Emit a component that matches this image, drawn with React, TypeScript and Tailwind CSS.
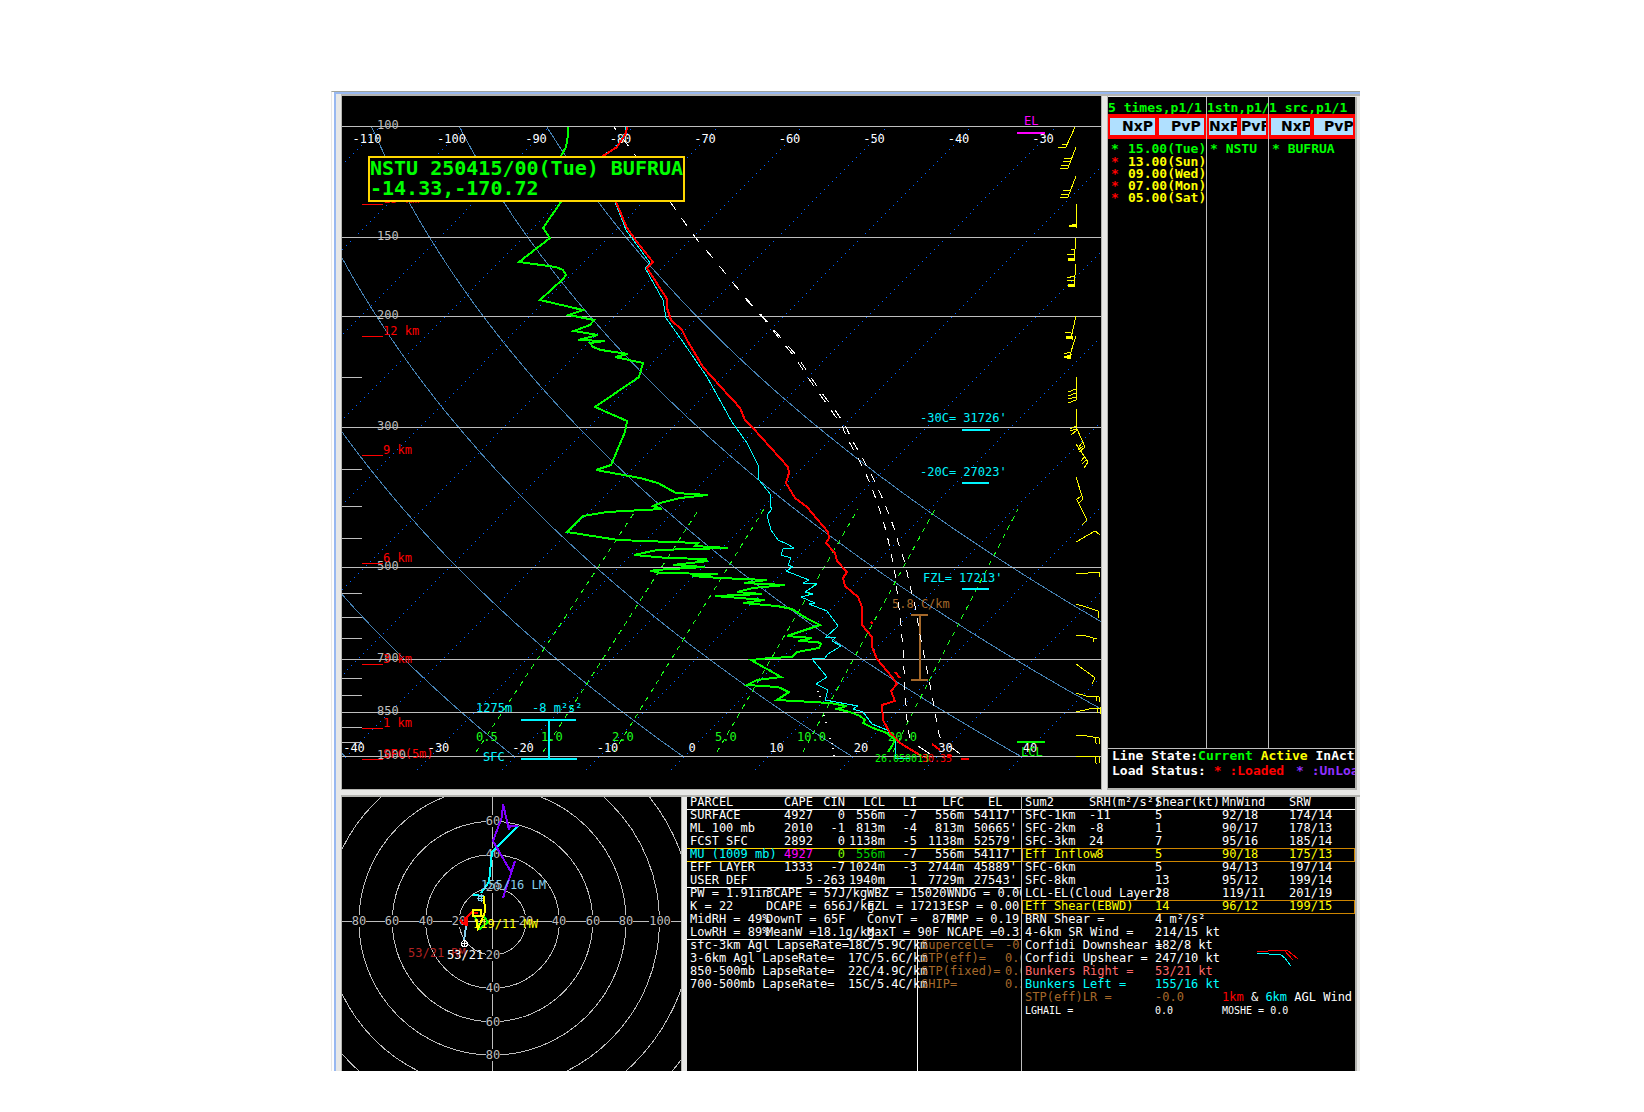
import React from "react";

type Pt = [number, number];

/* ---------- Skew-T geometry ---------- */
const yOf = (p: number) => 126.5 + 630 * Math.log10(p / 100);
const xOf = (t: number, y: number) => 438 + 8.45 * (t + 30) + (748 - y) * 0.9935;
const join = (a: Pt[]) => a.map(([x, y]) => `${Math.round(x * 10) / 10},${Math.round(y * 10) / 10}`).join(" ");

const isotherms = Array.from({ length: 17 }, (_, i) => -120 + i * 10);
const dots = (t: number) => {
  let d = "";
  for (let y = 769; y >= 128; y -= 4) {
    const x = Math.round(xOf(t, y));
    if (x >= 342 && x < 1100) d += `M${x} ${y}h1v1h-1z`;
  }
  return d;
};

const thetas = [-40, -20, 0, 20, 40, 60, 80];
const adiabat = (th: number) => {
  const out: Pt[] = [];
  for (let p = 100; p <= 1000; p += 10) {
    const y = yOf(p);
    out.push([xOf((th + 273.15) * Math.pow(p / 1000, 0.2857) - 273.15, y), y]);
  }
  return join(out);
};

const parse = (s: string) => s.split(" ").map((q) => q.split(",").map(Number) as Pt);
const at = (a: Pt[], y: number) => {
  const i = a.findIndex((q, k) => k > 0 && q[1] >= y);
  const [x0, y0] = a[i - 1];
  const [x1, y1] = a[i];
  return x0 + ((x1 - x0) * (y - y0)) / (y1 - y0);
};
/* dashes of equal height: 8 on, 8 off, whatever the slope */
const verticalDashes = (s: string) => {
  const a = parse(s);
  const end = a[a.length - 1][1];
  let d = "";
  for (let y = 10; y < end; y += 16) {
    const top = Math.max(y, a[0][1] + 1);
    const bottom = Math.min(y + 8, end);
    if (bottom <= top) continue;
    d += `M${at(a, top).toFixed(1)} ${top}L${at(a, bottom).toFixed(1)} ${bottom}`;
  }
  return d;
};

const mixing = ["M476 752L636 510", "M543 752L699 509", "M614 752L764 509", "M717 752L858 509", "M803 752L935 509", "M893 752L913 712L1018 509"];

const pressures: [number, number][] = [[100, 126], [150, 237], [200, 316], [300, 427], [500, 567], [700, 659], [850, 712], [1000, 756]];
const minorTicks = [377, 469, 506, 538, 593, 617, 638, 678, 695, 727, 742];
const kmMarks: [string, number, number][] = [["15 km", 204, 203], ["12 km", 336, 335], ["9 km", 455, 454], ["6 km", 563, 562], ["3 km", 664, 663], ["1 km", 728, 727], ["SFC(5m)", 759, 758]];
const mixLabels: [string, number][] = [["0.5", 476], ["1.0", 541], ["2.0", 612], ["5.0", 715], ["10.0", 797], ["20.0", 888]];

const dewPoint = "568,127 568,135 566,147 561,156 548,178 561,202 543,228 550,238 519,262 556,267 563,270 566,275 563,279 540,300 583,310 569,315 594,320 590,325 574,331 598,335 578,340 605,341 590,343 593,347 601,350 628,354 615,357 643,363 639,377 595,407 627,421 625,432 611,465 596,470 640,478 658,483 676,493 708,495 680,498 660,503 653,506 662,509 607,512 583,516 567,532 618,540 698,543 695,546 728,548 657,550 634,555 667,558 707,559 697,561 708,561 673,565 705,567 655,570 652,571 660,573 718,574 692,576 720,578 767,580 744,583 785,585 753,588 737,592 762,594 715,596 765,600 743,603 777,606 792,609 806,618 820,625 787,636 812,638 798,641 818,642 821,644 819,648 797,652 792,657 770,658 751,660 781,677 757,680 747,685 778,687 789,692 777,700 830,703 847,706 837,709 850,712 860,716 865,720 863,723 873,728 887,733 895,740 892,746 888,752";
const temperature = "627,127 626,133 617,147 603,156 605,178 616,202 627,228 637,242 653,262 647,268 667,299 667,308 671,320 682,330 687,340 703,367 730,397 733,400 740,408 745,420 753,428 788,467 789,473 786,483 795,498 807,507 828,532 829,538 826,543 835,553 837,561 847,572 843,578 845,586 858,597 862,607 862,625 872,637 872,647 877,659 892,677 897,684 891,691 895,701 882,705 883,720 890,733 900,743 923,757";
const wetBulb = "626,127 625,133 616,147 602,156 604,178 615,202 626,230 650,263 645,268 663,300 666,318 683,342 707,377 727,413 732,422 747,443 758,465 759,480 771,495 770,506 772,509 767,515 771,530 778,540 787,544 794,548 783,549 781,555 791,558 788,565 793,567 786,571 809,580 803,583 817,584 805,592 813,594 801,597 815,603 809,604 827,611 838,626 826,637 836,637 832,641 841,646 828,654 825,658 812,659 827,677 816,684 828,690 825,700 858,706 853,709 863,712 872,724 887,730 895,740 895,758 910,759";
const parcelA = "613,126 627,144 671,203 685,223 697,240 713,258 733,283 749,303 765,320 779,338 794,356 809,379 821,396 831,410 842,426 848,440 855,452 865,472 872,488 878,505 883,520 887,535 891,553 895,573 898,600 901,625 903,650 905,690 907,720 909,737 920,748 930,754";
const parcelB = "613,126 627,144 671,203 685,223 697,240 713,258 733,283 750,303 766,320 781,338 797,356 812,379 824,396 835,410 845,425 852,440 862,457 873,478 881,495 888,512 894,528 899,545 904,560 907,572 911,590 916,610 919,630 923,650 927,670 931,690 935,712 939,737 953,749 963,756";

const barbs = [
  "1076,127 1067,147 1059,147", "1069,144 1063,144",
  "1077,147 1069,168 1061,168", "1070,165 1062,165", "1071,161 1064,161", "1072,158 1065,158",
  "1077,176 1069,197 1061,197", "1070,194 1062,194", "1072,190 1064,190",
  "1077,204 1077,226", "1077,238 1075,260", "1075,254 1068,255", "1075,249 1072,250",
  "1077,264 1075,286", "1075,280 1068,281", "1075,276 1068,278",
  "1077,316 1072,338", "1072,332 1066,332", "1077,336 1070,358", "1071,352 1065,354",
  "1077,377 1077,400 1069,403", "1077,397 1069,399", "1077,393 1069,396", "1077,389 1069,392",
  "1077,409 1078,430 1072,435", "1077,426 1071,429", "1077,429 1071,431",
  "1078,429 1086,447 1080,452", "1084,446 1079,450", "1083,443 1079,448",
  "1077,444 1089,462 1085,468", "1088,459 1083,464", "1086,456 1082,461",
  "1077,477 1084,499 1079,504", "1082,496 1077,500",
  "1078,500 1088,520 1083,525", "1077,542 1096,531 1101,535", "1096,531 1099,533",
  "1077,574 1089,573 1100,572 1101,577",
  "1077,604 1087,607 1099,611 1100,618",
  "1077,635 1087,636 1098,639", "1095,638 1094,642",
  "1077,664 1095,677 1095,680 1093,684",
  "1077,693 1087,696 1100,697 1101,702", "1097,697 1098,701",
  "1077,712 1090,709 1101,708 1101,714", "1098,709 1099,713",
  "1077,735 1088,736 1100,738 1101,744", "1096,738 1097,743 1098,744",
  "1077,756 1100,757 1101,763", "1096,757 1097,763 1098,764",
];
const flags = ["1077,224 1070,226 1077,227", "1076,258 1069,258 1069,260 1075,261", "1076,284 1069,284 1069,286 1075,287", "1073,336 1067,336 1067,338 1073,339", "1072,355 1065,357 1071,359"];

function SkewT() {
  return (
    <svg viewBox="342 96 759 693" className="block w-full bg-black font-['DejaVu_Sans_Mono',monospace] text-[12px]" shapeRendering="crispEdges" fill="none">
      {isotherms.map((t) => <path key={t} d={dots(t)} fill="#0060ff" />)}
      {thetas.map((t) => <polyline key={t} points={adiabat(t)} stroke="#4682b4" />)}
      {mixing.map((d) => <path key={d} d={d} stroke="#1cff1c" strokeDasharray="5 5" />)}
      {pressures.map(([p, y]) => (
        <g key={p}>
          <line x1="342" x2="1101" y1={y + 0.5} y2={y + 0.5} stroke="#bebebe" />
          <text x="377" y={y + 3} fill="#bebebe">{p}</text>
        </g>
      ))}
      {minorTicks.map((y) => <line key={y} x1="342" x2="362" y1={y + 0.5} y2={y + 0.5} stroke="#bebebe" />)}
      {kmMarks.map(([l, ly, ty]) => (
        <g key={l}>
          <line x1="362" x2="383" y1={ly + 0.5} y2={ly + 0.5} stroke="#ff0000" />
          <text x="383" y={ty} fill="#ff0000">{l}</text>
        </g>
      ))}
      {[-110, -100, -90, -80, -70, -60, -50, -40, -30].map((t) => (
        <text key={t} x={367 + (t + 110) * 8.45} y="143" fill="#fff" textAnchor="middle">{t}</text>
      ))}
      {[-40, -30, -20, -10, 0, 10, 20, 30, 40].map((t) => (
        <text key={t} x={354 + (t + 40) * 8.45} y="752" fill="#fff" textAnchor="middle">{t}</text>
      ))}
      {mixLabels.map(([l, x]) => <text key={l} x={x} y="741" fill="#1cff1c">{l}</text>)}

      <path d="M521 720H576M549 720V759M521 759H577M962 430H990M962 483H989M962 589H989" stroke="#00f5ff" strokeWidth="2" />
      <g fill="#00f5ff">
        <text x="476" y="712">1275m</text>
        <text x="532" y="712">-8 m²s²</text>
        <text x="483" y="761">SFC</text>
        <text x="920" y="422">-30C= 31726'</text>
        <text x="920" y="476">-20C= 27023'</text>
        <text x="923" y="582">FZL= 17213'</text>
      </g>
      <path d="M911 615H928M920 615V680M911 680H928" stroke="#a5682a" strokeWidth="2" />
      <text x="892" y="608" fill="#a5682a">5.8 C/km</text>
      <text x="1024" y="125" fill="#ff00ff">EL</text>
      <path d="M1017 133H1045" stroke="#ff00ff" strokeWidth="2" />
      <text x="1021" y="756" fill="#00ff00">LCL</text>
      <path d="M1017 742H1045" stroke="#00ff00" strokeWidth="2" />

      <path d={verticalDashes(parcelA)} stroke="#fff" />
      <path d={verticalDashes(parcelB)} stroke="#fff" />
      <path d="M817 691h2M819 696h2M823 715h2M825 722h2M829 738h2M831 743h2M832 748h2M833 755h2" stroke="#fff" />
      <polyline points={wetBulb} stroke="#00ffff" />
      <polyline points={temperature} stroke="#ff0000" strokeWidth="2" />
      <path d="M871 622l2 2M895 672l5 6M932 744l8 6M947 756h5M961 759h8" stroke="#ff0000" strokeWidth="2" />
      <polyline points={dewPoint} stroke="#00ff00" strokeWidth="2" />
      <g className="text-[10px]">
        <text x="875" y="762" fill="#00ff00">26.050013</text>
        <text x="922" y="762" fill="#ff0000">30.35</text>
      </g>
      <g transform="translate(-1 0)">
        {barbs.map((b) => <polyline key={b} points={b} stroke="#ffff00" />)}
        {flags.map((b) => <polygon key={b} points={b} fill="#ffff00" stroke="#ffff00" />)}
      </g>
    </svg>
  );
}

/* ---------- Hodograph ---------- */
const ringLabels: [string, number, number][] = [
  ["80", 359, 921], ["60", 392, 921], ["40", 426, 921], ["20", 459, 921], ["20", 526, 921], ["40", 559, 921], ["60", 593, 921], ["80", 626, 921], ["100", 660, 921],
  ["60", 493, 821], ["40", 493, 854], ["20", 493, 887], ["20", 493, 955], ["40", 493, 988], ["60", 493, 1022], ["80", 493, 1055],
];

function Hodograph() {
  return (
    <svg viewBox="342 797 339 274" className="block w-full bg-black font-['DejaVu_Sans_Mono',monospace] text-[12px]" shapeRendering="crispEdges" fill="none">
      <g stroke="#bebebe">
        {[1, 2, 3, 4, 5, 6, 7].map((n) => <circle key={n} cx="492.5" cy="921.5" r={n * 33.4} />)}
        <path d="M342 921.5H681M492.5 797V1071" />
      </g>
      {ringLabels.map(([l, x, y]) => (
        <g key={`${x}-${y}`}>
          <rect x={x - l.length * 3.6} y={y - 6} width={l.length * 7.2} height="12" fill="#000" />
          <text x={x} y={y + 4} textAnchor="middle" fill="#bebebe">{l}</text>
        </g>
      ))}
      <polyline points="518,826 492,852 489,882 481,893" stroke="#00ffff" strokeWidth="2" />
      <polyline points="473,895 484,896" stroke="#00ffff" strokeWidth="2" />
      <polyline points="503,898 515,861 511,872 493,841 502,817 503,804 509,830 510,826 518,826" stroke="#7f00ff" strokeWidth="2" />
      <g stroke="#87ceeb">
        <circle cx="481" cy="898" r="3" />
        <path d="M477 898h8M481 894v8" />
        <path d="M466 926L464 941" strokeWidth="2" />
      </g>
      <text x="481" y="889" fill="#87ceeb">155/16 LM</text>
      <text x="408" y="957" fill="#b22222">53/21 RM</text>
      <path d="M472 912L467 917V925L464 924L460 920M461 923h6M465 925v-8" stroke="#ff0000" strokeWidth="2" />
      <path d="M475 917L480 929L488 922L483 915" stroke="#00ff00" strokeWidth="2" />
      <path d="M484 896L485 912L478 929L476 920" stroke="#ffff00" strokeWidth="2" />
      <rect x="473" y="910" width="8" height="6" stroke="#ffff00" strokeWidth="2" />
      <path d="M474 913h4" stroke="#ff0000" strokeWidth="2" />
      <text x="473" y="928" fill="#ffff00">119/11 MW</text>
      <g stroke="#fff">
        <circle cx="464.5" cy="943.5" r="3" />
        <path d="M461 943.5h7M464.5 940v7" />
      </g>
      <text x="447" y="959" fill="#fff">53/21</text>
    </svg>
  );
}

/* ---------- Selection panel ---------- */
function Col({ title, className, btn, children }: { title: string; className: string; btn: [string, string]; children: React.ReactNode }) {
  const b = "min-w-0 overflow-hidden whitespace-nowrap border-x-2 border-y-4 border-[#ff0000] bg-[#b0e0ff] text-left font-['DejaVu_Sans',sans-serif] text-[14px] leading-[17px] font-bold text-black";
  return (
    <section className={`min-w-0 overflow-hidden whitespace-pre ${className}`}>
      <h2 className="h-[17px] pt-[3px] text-[13px] leading-[16px] text-[#00ff00]">{title}</h2>
      <div className={`grid h-[25px] ${btn[0]}`}>
        <button className={`${b} ${btn[1]}`}>NxP</button>
        <button className={`${b} ${btn[1]}`}>PvP</button>
      </div>
      <ul className="pt-[4px] text-[13px] leading-[12px]">{children}</ul>
    </section>
  );
}

const times: [string, boolean][] = [["15.00(Tue)", true], ["13.00(Sun)", false], ["09.00(Wed)", false], ["07.00(Mon)", false], ["05.00(Sat)", false]];

function Selector() {
  return (
    <aside className="flex w-[252px] shrink-0 flex-col border-r-[3px] border-[#e8e8e6]">
      <div className="flex flex-1 flex-col overflow-hidden border-r-2 border-b-2 border-[#b4b4b0] bg-black font-['DejaVu_Sans_Mono',monospace] font-bold">
        <div className="flex flex-1">
          <Col title="5 times,p1/1" className="w-[99px] border-r border-[#bebebe]" btn={["grid-cols-[49px_1fr]", "pl-[12px]"]}>
            {times.map(([t, cur]) => (
              <li key={t} className={cur ? "pb-px text-[#00ff00]" : "text-[#ffff00]"}>
                <span className={cur ? "inline-block w-[20px] pl-[3px]" : "inline-block w-[20px] pl-[3px] text-[#ff0000]"}>*</span>
                {t}
              </li>
            ))}
          </Col>
          <Col title="1stn,p1/1" className="w-[62px] border-r border-[#bebebe]" btn={["grid-cols-[32px_1fr]", "pl-0"]}>
            <li className="pl-[3px] text-[#00ff00]">* NSTU</li>
          </Col>
          <Col title="1 src,p1/1" className="flex-1" btn={["grid-cols-[43px_1fr]", "pl-[10px]"]}>
            <li className="pl-[3px] text-[#00ff00]">* BUFRUA</li>
          </Col>
        </div>
        <div className="h-[40px] overflow-hidden border-t border-[#bebebe] pl-[4px] text-[13px] leading-[15px] whitespace-pre text-white">
          <div className="-mt-px">Line State:<span className="text-[#00ff00]">Current</span> <span className="text-[#ffff00]">Active</span> InActive</div>
          <div>Load Status: <span className="text-[#ff0000]">* :Loaded</span> <span className="pl-[4px] text-[#9030ff]">* :UnLoaded</span></div>
        </div>
      </div>
    </aside>
  );
}

/* ---------- Parcel table ---------- */
const parcels = [
  ["PARCEL", "CAPE", "CIN", "LCL", "LI", "LFC", "EL  "],
  ["SURFACE", "4927", "0", "556m", "-7", "556m", "54117'"],
  ["ML 100 mb", "2010", "-1", "813m", "-4", "813m", "50665'"],
  ["FCST SFC", "2892", "0", "1138m", "-5", "1138m", "52579'"],
  ["MU (1009 mb)", "4927", "0", "556m", "-7", "556m", "54117'"],
  ["EFF LAYER", "1333", "-7", "1024m", "-3", "2744m", "45889'"],
  ["USER DEF", "5", "-263", "1940m", "1", "7729m", "27543'"],
];
const muColors = ["text-[#00ffff]", "text-[#ff00ff]", "text-[#7fff00]", "text-[#00d000]", "", "", ""];
const rowLine: Record<number, string> = { 0: "border-b border-white", 3: "border-b border-[#ffd700]", 4: "border-b border-[#ffd700]", 6: "border-b border-white" };

const indices = [
  ["PW = 1.91in", "3CAPE = 57J/kg", "WBZ = 15020'", "WNDG = 0.00"],
  ["K = 22", "DCAPE = 656J/kg", "FZL = 17213'", "ESP = 0.00"],
  ["MidRH = 49%", "DownT = 65F", "ConvT =  87F", "MMP = 0.19"],
  ["LowRH = 89%", "MeanW =18.1g/kg", "MaxT = 90F", "NCAPE =0.31"],
];
const lapse = [
  ["sfc-3km Agl LapseRate=", "18C/5.9C/km"],
  ["3-6km Agl LapseRate=", "17C/5.6C/km"],
  ["850-500mb LapseRate=", "22C/4.9C/km"],
  ["700-500mb LapseRate=", "15C/5.4C/km"],
];
const composites = [["Supercell=", "-0.0"], ["STP(eff)=", "0.0"], ["STP(fixed)=", "0.0"], ["SHIP=", "0.3"]];

const cell = "h-[13px] p-0 align-top font-normal whitespace-pre";

function Thermo() {
  return (
    <section className="flex w-[335px] shrink-0 flex-col overflow-hidden border-r border-[#bebebe] bg-black">
      <table className="w-full table-fixed border-separate border-spacing-0 text-left">
        <colgroup>
          <col className="w-[82px]" /><col className="w-[44px]" /><col className="w-[32px]" /><col className="w-[40px]" /><col className="w-[32px]" /><col className="w-[47px]" /><col />
        </colgroup>
        <tbody>
          {parcels.map((r, i) => (
            <tr key={r[0]}>
              {r.map((c, j) => {
                const cls = `${cell} ${rowLine[i] ?? ""} ${i === 4 ? muColors[j] : ""} ${j ? "text-right" : "pl-[3px]"} ${j === 6 ? "pr-[4px]" : ""}`;
                return i === 0 ? <th key={j} className={cls}>{c}</th> : <td key={j} className={cls}>{c}</td>;
              })}
            </tr>
          ))}
        </tbody>
      </table>
      <div className="grid grid-cols-[76px_101px_80px_1fr] border-b border-white pl-[3px] whitespace-pre">
        {indices.flat().map((c, i) => <div key={c} className={i > 11 ? "h-[12px] min-w-0" : "h-[13px] min-w-0"}>{c}</div>)}
      </div>
      <div className="flex flex-1 whitespace-pre">
        <div className="w-[231px] shrink-0 border-r border-white pl-[3px]">
          {lapse.map(([a, b]) => <div key={a} className="grid h-[13px] grid-cols-[158px_1fr]"><span>{a}</span><span>{b}</span></div>)}
        </div>
        <div className="pl-[3px] text-[#a5682a]">
          {composites.map(([a, b]) => <div key={a} className="grid h-[13px] grid-cols-[84px_1fr]"><span>{a}</span><span>{b}</span></div>)}
        </div>
      </div>
    </section>
  );
}

/* ---------- Wind summary ---------- */
const winds = [
  ["Sum2", "SRH(m²/s²)", "Shear(kt)", "MnWind", "SRW"],
  ["SFC-1km", "-11", "5", "92/18", "174/14"],
  ["SFC-2km", "-8", "1", "90/17", "178/13"],
  ["SFC-3km", "24", "7", "95/16", "185/14"],
  ["Eff Inflow", " 8", "5", "90/18", "175/13"],
  ["SFC-6km", "", "5", "94/13", "197/14"],
  ["SFC-8km", "", "13", "95/12", "199/14"],
  ["LCL-EL(Cloud Layer)", "", "28", "119/11", "201/19"],
  ["Eff Shear(EBWD)", "", "14", "96/12", "199/15"],
];
const summary: [string, string, string][] = [
  ["BRN Shear =", "4 m²/s²", "text-white"],
  ["4-6km SR Wind =", "214/15 kt", "text-white"],
  ["Corfidi Downshear =", "182/8 kt", "text-white"],
  ["Corfidi Upshear =", "247/10 kt", "text-white"],
  ["Bunkers Right =", "53/21 kt", "text-[#ff6a6a]"],
  ["Bunkers Left =", "155/16 kt", "text-[#00ffff]"],
];

function WindSummary() {
  return (
    <section className="relative w-[333px] shrink-0 overflow-hidden bg-black whitespace-pre">
      <table className="w-full table-fixed border-separate border-spacing-0 text-left">
        <colgroup>
          <col className="w-[67px]" /><col className="w-[66px]" /><col className="w-[67px]" /><col className="w-[67px]" /><col />
        </colgroup>
        <tbody>
          {winds.map((r, i) => {
            const hot = i === 4 || i === 8;
            const line = i === 0 ? "border-b border-white" : i === 3 || i === 7 || hot ? "border-b border-[#cd8500]" : "";
            return (
              <tr key={r[0]} className={hot ? "text-[#ffff00]" : ""}>
                {r.map((c, j) => {
                  const side = j === 0 ? (hot ? "border-l border-[#cd8500] pl-[2px]" : "pl-[3px]") : j === 4 && hot ? "border-r border-[#cd8500]" : "";
                  const cls = `${cell} ${line} ${side}`;
                  return i === 0 ? <th key={j} className={cls}>{c}</th> : <td key={j} className={cls}>{c}</td>;
                })}
              </tr>
            );
          })}
        </tbody>
      </table>
      <dl className="pl-[3px]">
        {summary.map(([a, b, c]) => (
          <div key={a} className={`grid h-[13px] grid-cols-[130px_1fr] ${c}`}><dt>{a}</dt><dd>{b}</dd></div>
        ))}
        <div className="grid h-[13px] grid-cols-[130px_67px_1fr]">
          <dt className="text-[#a5682a]">STP(eff)LR =</dt>
          <dd className="text-[#a5682a]">-0.0</dd>
          <dd><span className="text-[#ff0000]">1km</span> &amp; <span className="text-[#00ffff]">6km</span> AGL Wind</dd>
        </div>
        <div className="grid h-[13px] grid-cols-[130px_67px_1fr] text-[10px]">
          <dt>LGHAIL =</dt><dd>0.0</dd><dd>MOSHE = 0.0</dd>
        </div>
      </dl>
      <svg viewBox="0 0 44 20" className="absolute top-[150px] right-[55px] h-[20px] w-[44px]" shapeRendering="crispEdges" fill="none">
        <path d="M1 5L12 4L26 3L31 3L42 12M28 3L37 13" stroke="#ff0000" />
        <path d="M1 6L13 7L25 8L29 11L35 19" stroke="#00ffff" />
      </svg>
    </section>
  );
}

export default function App() {
  return (
    <main className="min-h-[1112px] bg-white pt-[91px] pr-[284px] pl-[331px]">
      <div className="border-t border-l border-t-[#a0a49c] border-l-[#e8e8e6] pl-[2px]">
        <div className="border-t-2 border-l-2 border-[#98b8f0] bg-[#e8e8e6] pl-[5px]">
          <div className="flex border-t-2 border-[#b4b4b0]">
            <div className="relative min-w-0 flex-1 border-r border-b border-l border-[#b4b4b0]">
              <SkewT />
              <h1 className="absolute top-[60px] left-[26px] border-2 border-[#ffd700] bg-black pb-[2px] font-['DejaVu_Sans_Mono',monospace] text-[20px] leading-[20px] font-bold whitespace-pre text-[#00ff00]">
                {"NSTU 250415/00(Tue) BUFRUA\n-14.33,-170.72 "}
              </h1>
            </div>
            <div className="w-[5px] shrink-0" />
            <div className="flex border-l border-[#b4b4b0] pt-px"><Selector /></div>
          </div>
          <div className="mt-[5px] flex border-t-2 border-[#b4b4b0]">
            <div className="min-w-0 flex-1 border-x border-[#b4b4b0]"><Hodograph /></div>
            <div className="w-[5px] shrink-0" />
            <div className="flex shrink-0 border-r-2 border-[#b4b4b0] font-['DejaVu_Sans_Mono',monospace] text-[12px] leading-[11px] text-white">
              <Thermo />
              <WindSummary />
            </div>
            <div className="w-[3px] shrink-0" />
          </div>
        </div>
      </div>
    </main>
  );
}
